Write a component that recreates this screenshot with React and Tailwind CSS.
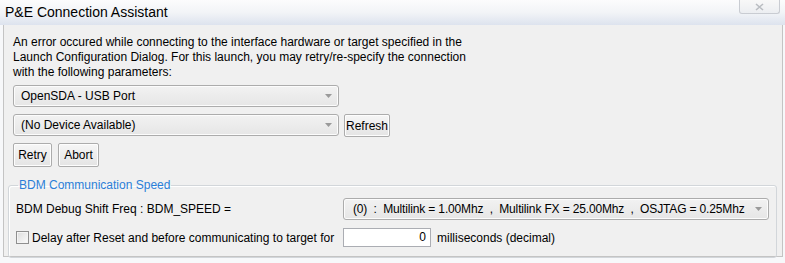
import React from 'react';

function Combo({ className, children }) {
    return (
        <div className={"flex items-center justify-between rounded-[3px] border border-[#acacac] bg-gradient-to-b from-[#f2f2f2] to-[#e6e6e6] shadow-[inset_0_0_0_1px_#fcfcfc] " + className}>
            <span className="whitespace-pre">{children}</span>
            <svg width="7" height="4" viewBox="0 0 7 4" className="mr-[6px] shrink-0">
                <path d="M0 0h7L3.5 4z" fill="#9a9a9a" />
            </svg>
        </div>
    );
}

function Button({ className, children }) {
    return (
        <button type="button" className={"rounded-[2px] border border-[#acacac] bg-gradient-to-b from-[#f6f6f6] to-[#e4e4e4] shadow-[inset_0_0_0_1px_#fdfdfd] leading-none " + className}>
            {children}
        </button>
    );
}

function App() {
    return (
        <div className="w-[785px] h-[263px] overflow-hidden bg-[#f7f8fa] font-['Liberation_Sans',sans-serif] text-[12px] text-black">
            <div className="h-[25px] bg-gradient-to-b from-[#fcfcfd] via-[#f2f4f7] to-[#dde3ee] flex items-start justify-between">
                <span className="pl-[5px] pt-[4px] text-[14px] leading-[16px]">P&amp;E Connection Assistant</span>
                <div className="mr-[5px] w-[41px] h-[14px] flex items-center justify-center rounded-b-[3px] border border-t-0 border-[#c9ccd2] bg-gradient-to-b from-[#f8f8f8] to-[#eceef1]">
                    <svg width="9" height="8" viewBox="0 0 9 8">
                        <path d="M1 1l7 6M8 1L1 7" stroke="#b9bcc1" strokeWidth="1.6" />
                    </svg>
                </div>
            </div>

            <div className="ml-[3px] w-[780px] h-[232px] border-x border-b border-[#c4c4c4] bg-[#f0f0f0] pt-[10px]">
                <p className="pl-[9px] leading-[15px]">
                    An error occured while connecting to the interface hardware or target specified in the<br />
                    Launch Configuration Dialog. For this launch, you may retry/re-specify the connection<br />
                    with the following parameters:
                </p>

                <Combo className="ml-[9px] mt-[5px] w-[326px] h-[22px] pl-[7px]">OpenSDA - USB Port</Combo>

                <div className="ml-[9px] mt-[7px] flex gap-[5px]">
                    <Combo className="w-[326px] h-[22px] pl-[7px]">(No Device Available)</Combo>
                    <Button className="w-[46px] h-[23px]">Refresh</Button>
                </div>

                <div className="ml-[9px] mt-[6px] flex gap-[6px]">
                    <Button className="w-[39px] h-[24px]">Retry</Button>
                    <Button className="w-[41px] h-[24px]">Abort</Button>
                </div>

                <fieldset className="ml-[4px] mr-[5px] mt-[11px] h-[80px] rounded-[3px] border border-[#d2d6da] shadow-[inset_1px_1px_0_#ffffff] px-[7px]">
                    <legend className="ml-[2px] px-[1px] text-[#2b7fd8] leading-[15px]">BDM Communication Speed</legend>

                    <div className="mt-[5px] flex items-center">
                        <span className="w-[327px]">BDM Debug Shift Freq : BDM_SPEED =</span>
                        <Combo className="w-[426px] h-[22px] pl-[9px] tracking-[-0.15px]">(0)  :  Multilink = 1.00Mhz  ,  Multilink FX = 25.00Mhz  ,  OSJTAG = 0.25Mhz</Combo>
                    </div>

                    <div className="mt-[8px] flex items-center">
                        <span className="w-[13px] h-[13px] border border-[#8f8f8f] bg-gradient-to-br from-[#dcdcdc] to-[#fbfbfb] shadow-[inset_0_0_0_1px_#f4f4f4]" />
                        <span className="ml-[3px] w-[311px]">Delay after Reset and before communicating to target for</span>
                        <span className="w-[88px] h-[19px] border border-[#abadb3] bg-white text-right pr-[4px] leading-[17px]">0</span>
                        <span className="ml-[6px]">milliseconds (decimal)</span>
                    </div>
                </fieldset>
            </div>
        </div>
    );
}

export default App;
